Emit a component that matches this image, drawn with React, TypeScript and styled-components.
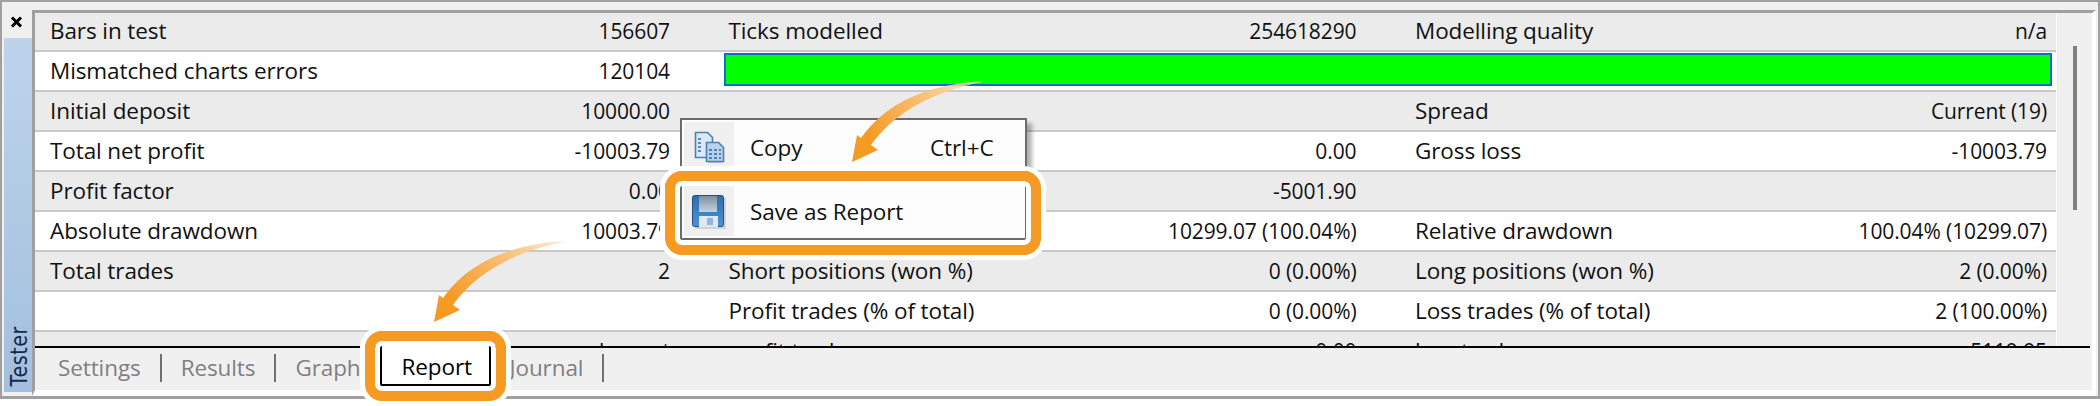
import React from "react";
import styled, { createGlobalStyle } from "styled-components";

const GlobalStyle = createGlobalStyle`
  html, body {
    margin: 0;
    padding: 0;
    background: #fff;
  }
  body {
    font-family: "Open Sans", "Noto Sans", Arial, sans-serif;
  }
`;

type Cell = { label?: string; value?: string };

const rows: { cells: Cell[]; bar?: boolean }[] = [
  { cells: [{ label: "Bars in test", value: "156607" }, { label: "Ticks modelled", value: "254618290" }, { label: "Modelling quality", value: "n/a" }] },
  { cells: [{ label: "Mismatched charts errors", value: "120104" }], bar: true },
  { cells: [{ label: "Initial deposit", value: "10000.00" }, {}, { label: "Spread", value: "Current (19)" }] },
  { cells: [{ label: "Total net profit", value: "-10003.79" }, { label: "Gross profit", value: "0.00" }, { label: "Gross loss", value: "-10003.79" }] },
  { cells: [{ label: "Profit factor", value: "0.00" }, { label: "Expected payoff", value: "-5001.90" }, {}] },
  { cells: [{ label: "Absolute drawdown", value: "10003.79" }, { label: "Maximal drawdown", value: "10299.07 (100.04%)" }, { label: "Relative drawdown", value: "100.04% (10299.07)" }] },
  { cells: [{ label: "Total trades", value: "2" }, { label: "Short positions (won %)", value: "0 (0.00%)" }, { label: "Long positions (won %)", value: "2 (0.00%)" }] },
  { cells: [{}, { label: "Profit trades (% of total)", value: "0 (0.00%)" }, { label: "Loss trades (% of total)", value: "2 (100.00%)" }] },
  { cells: [{ value: "Largest" }, { label: "profit trade", value: "0.00" }, { label: "loss trade", value: "-5119.95" }] },
];

const Page = styled.div`
  position: relative;
  width: 2100px;
  height: 406px;
  overflow: hidden;
  background: #fff;
  font-size: 22.5px;
  letter-spacing: -0.1px;
  color: #111;
`;

const Frame = styled.div`
  box-sizing: border-box;
  display: flex;
  width: 2100px;
  height: 399px;
  background: #f0f0f0;
  border: solid #a0a0a0;
  border-width: 2px 2px 3px;
`;

const Side = styled.div`
  display: flex;
  flex-direction: column;
  width: 30px;
  flex: none;
`;

const CloseButton = styled.div`
  height: 36px;
  padding: 14px 0 0 8px;
  box-sizing: border-box;
  line-height: 0;
`;

const Strip = styled.div`
  flex: 1;
  margin: 0 0 4px 2px;
  display: flex;
  align-items: flex-end;
  justify-content: center;
  background: linear-gradient(#bdd4eb, #a3bfdd);
`;

const StripLabel = styled.span`
  writing-mode: vertical-rl;
  transform: rotate(180deg) scaleX(1.22);
  font-family: "DejaVu Sans", sans-serif;
  font-size: 19px;
  letter-spacing: 0.6px;
  line-height: 20px;
  color: #16284c;
  padding-top: 5px;
`;

const Main = styled.div`
  flex: 1;
  display: flex;
  flex-direction: column;
  box-sizing: border-box;
  margin: 8px 2px 0 0;
  background: #f0f0f0;
  border: solid;
  border-color: #a0a0a0 #fff #fff #a0a0a0;
  border-width: 3px 4px 6px 3px;
`;

const Viewport = styled.div`
  display: flex;
  height: 333px;
  overflow: hidden;
`;

const Table = styled.div`
  width: 2021px;
  flex: none;
  margin-top: -1px;
`;

const Row = styled.div<{ $odd: boolean }>`
  box-sizing: border-box;
  display: grid;
  grid-template-columns: 620px 628px 632px;
  column-gap: 58.5px;
  height: 40px;
  padding: 0 9px 0 15px;
  align-items: center;
  background: ${(p) => (p.$odd ? "#ebebeb" : "#fff")};
  border-bottom: 2px solid #c8c8c8;
`;

const CellBox = styled.div`
  display: flex;
  justify-content: space-between;
  align-items: baseline;
  white-space: nowrap;
  line-height: 38px;
`;

const Value = styled.span`
  font-size: 21px;
`;

const QualityBar = styled.div`
  grid-column: 2 / 4;
  align-self: start;
  height: 33px;
  margin: 1px -5px 0;
  box-sizing: border-box;
  background: #00ff00;
  border: 2px solid #0a6ed1;
`;

const Scrollbar = styled.div`
  flex: 1;
  position: relative;
  border-left: 1px solid #fafafa;
`;

const Thumb = styled.div`
  position: absolute;
  left: 16px;
  top: 33px;
  width: 4px;
  height: 164px;
  background: #808080;
`;

const TabRule = styled.div`
  height: 2px;
  margin-right: 2px;
  background: #000;
  flex: none;
`;

const TabBar = styled.div`
  flex: 1;
  display: flex;
  align-items: center;
  gap: 19px;
  padding: 0 0 3px 23px;
`;

const Tab = styled.div<{ $active?: boolean }>`
  color: ${(p) => (p.$active ? "#000" : "#808080")};
  white-space: nowrap;
  ${(p) =>
    p.$active &&
    `
    align-self: flex-start;
    box-sizing: border-box;
    width: 111px;
    height: 40px;
    margin-top: -2px;
    padding-left: 20px;
    line-height: 41px;
    background: #fff;
    border: solid #000;
    border-width: 0 2px 2px;
  `}
`;

const TabSeparator = styled.div`
  width: 2px;
  height: 28px;
  background: #707070;
`;

const Menu = styled.div`
  position: absolute;
  left: 680px;
  top: 118px;
  box-sizing: border-box;
  width: 347px;
  height: 122px;
  padding: 2px;
  display: flex;
  flex-direction: column;
  gap: 14px;
  background: #fdfdfd;
  border: 2px solid #6b6b6b;
  box-shadow: 5px 5px 4px rgba(0, 0, 0, 0.3);
`;

const MenuItem = styled.div`
  display: flex;
  align-items: center;
  height: 50px;
`;

const MenuIcon = styled.div`
  width: 50px;
  height: 50px;
  flex: none;
  display: flex;
  align-items: center;
  justify-content: center;
  background: #f0f0f0;
`;

const MenuLabel = styled.span`
  margin-left: 16px;
  width: 180px;
`;

const Highlight = styled.div`
  position: absolute;
  box-sizing: border-box;
  border: 10px solid #f59a23;
  border-radius: 17px;
  box-shadow: 0 0 0 5px #fff, inset 0 0 0 5px #fff;
`;

const MenuHighlight = styled(Highlight)`
  left: 665px;
  top: 171px;
  width: 376px;
  height: 84px;
`;

const TabHighlight = styled(Highlight)`
  left: 365px;
  top: 331px;
  width: 141px;
  height: 70px;
`;

const ArrowSvg = styled.svg<{ $left: number; $top: number }>`
  position: absolute;
  left: ${(p) => p.$left}px;
  top: ${(p) => p.$top}px;
`;

const Arrow = ({ id, left, top }: { id: string; left: number; top: number }) => (
  <ArrowSvg $left={left} $top={top} width="140" height="90" viewBox="0 0 140 90">
    <defs>
      <linearGradient id={id} gradientUnits="userSpaceOnUse" x1="136" y1="4" x2="20" y2="60">
        <stop offset="0" stopColor="#fde3bf" stopOpacity="0.7" />
        <stop offset="0.45" stopColor="#f9c27c" />
        <stop offset="1" stopColor="#f59a23" />
      </linearGradient>
    </defs>
    <path
      d="M136 3.5C97 4 57 17 32 39C24 46 18 53 13 60L9 57L4 84L30 72L23 67C30 57 40 47 49 40C72 22 102 10 136 3.5Z"
      fill={`url(#${id})`}
    />
  </ArrowSvg>
);

const CopyIcon = () => (
  <svg width="34" height="34" viewBox="0 0 34 34">
    <path d="M16 14h9l6 6v13H16z" fill="#000" opacity="0.18" />
    <path d="M3.5 2.5h12l5 5v20h-17z" fill="#dbe8f6" stroke="#4c80b6" strokeWidth="1.6" />
    <path d="M6 8h3v2H6zm0 4h3v2H6zm0 4h3v2H6zm0 4h3v2H6z" fill="#5d8dbf" />
    <path d="M14.5 12.5h12l5 5v14h-17z" fill="#b9d2ec" stroke="#4c80b6" strokeWidth="1.6" />
    <path
      d="M17 19h3v2h-3zm5 0h3v2h-3zm5 0h2v2h-2zm-10 4h3v2h-3zm5 0h3v2h-3zm5 0h2v2h-2zm-10 4h3v2h-3zm5 0h3v2h-3zm5 0h2v2h-2z"
      fill="#4c80b6"
    />
  </svg>
);

const SaveIcon = () => (
  <svg width="36" height="36" viewBox="0 -1 36 36">
    <defs>
      <linearGradient id="disk" x1="0" y1="0" x2="0" y2="1">
        <stop offset="0" stopColor="#2f6ea8" />
        <stop offset="1" stopColor="#4b93d6" />
      </linearGradient>
      <linearGradient id="label" x1="0" y1="0" x2="0" y2="1">
        <stop offset="0" stopColor="#7d8fa3" />
        <stop offset="1" stopColor="#c5d0dc" />
      </linearGradient>
    </defs>
    <rect x="4" y="4" width="31" height="31" fill="#000" opacity="0.12" />
    <rect x="1.5" y="1.5" width="31" height="31" rx="2" fill="url(#disk)" stroke="#20527f" />
    <rect x="8" y="2" width="18" height="16" fill="url(#label)" />
    <rect x="8" y="22" width="19" height="11" fill="#dfe9f4" />
    <rect x="16" y="24" width="6" height="7" fill="#8fb6dc" />
  </svg>
);

const CloseIcon = () => (
  <svg width="13" height="12" viewBox="0 0 13 12">
    <path d="M2 1.5L11 10.5M11 1.5L2 10.5" stroke="#000" strokeWidth="3" />
  </svg>
);

export default function App() {
  return (
    <Page>
      <GlobalStyle />
      <Frame>
        <Side>
          <CloseButton>
            <CloseIcon />
          </CloseButton>
          <Strip>
            <StripLabel>Tester</StripLabel>
          </Strip>
        </Side>
        <Main>
          <Viewport>
            <Table>
              {rows.map((row, i) => (
                <Row key={i} $odd={i % 2 === 0}>
                  {row.cells.map((cell, j) => (
                    <CellBox key={j}>
                      <span>{cell.label}</span>
                      <Value>{cell.value}</Value>
                    </CellBox>
                  ))}
                  {row.bar && <QualityBar />}
                </Row>
              ))}
            </Table>
            <Scrollbar>
              <Thumb />
            </Scrollbar>
          </Viewport>
          <TabRule />
          <TabBar>
            <Tab>Settings</Tab>
            <TabSeparator />
            <Tab>Results</Tab>
            <TabSeparator />
            <Tab>Graph</Tab>
            <Tab $active>Report</Tab>
            <Tab>Journal</Tab>
            <TabSeparator />
          </TabBar>
        </Main>
      </Frame>
      <Menu>
        <MenuItem>
          <MenuIcon>
            <CopyIcon />
          </MenuIcon>
          <MenuLabel>Copy</MenuLabel>
          <span>Ctrl+C</span>
        </MenuItem>
        <MenuItem>
          <MenuIcon>
            <SaveIcon />
          </MenuIcon>
          <MenuLabel>Save as Report</MenuLabel>
        </MenuItem>
      </Menu>
      <MenuHighlight />
      <TabHighlight />
      <Arrow id="arrow-menu" left={848} top={78} />
      <Arrow id="arrow-tab" left={430} top={238} />
    </Page>
  );
}
